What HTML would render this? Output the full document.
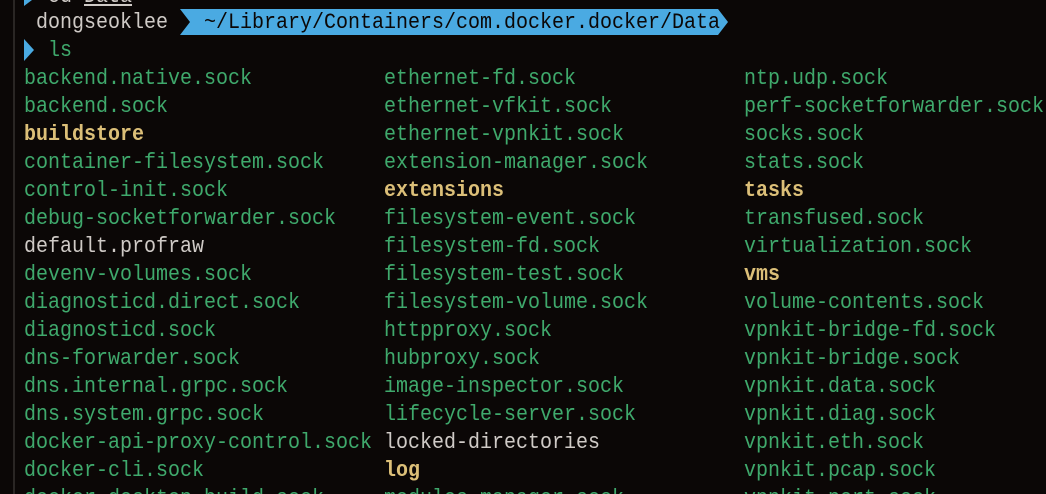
<!DOCTYPE html>
<html><head><meta charset="utf-8"><style>
html,body{margin:0;padding:0;background:#0b0706;width:1046px;height:494px;overflow:hidden;position:relative}
.l{position:absolute;font-family:"Liberation Mono",monospace;font-size:22px;line-height:28px;white-space:pre;color:#3fa96c;transform:scaleX(0.909);transform-origin:0 0}
.y{color:#dcbf78;font-weight:bold}
.w{color:#cfcac6}
.bar{position:absolute;left:13px;top:0;width:2px;height:494px;background:#2a2624}
</style></head><body>
<div class="bar"></div>
<div class="l w" style="left:24px;top:-17px">  cd <span style="text-decoration:underline">Data</span></div>
<svg style="position:absolute;left:0;top:0" width="1046" height="70">
<polygon points="24,-6 32,0 24,6" fill="#4aaae2"/>
<polygon points="180,9 718,9 728,22 718,35 180,35 190,22" fill="#4aaae2"/>
<polygon points="24,39 34,50 24,61" fill="#4aaae2"/>
</svg>
<div class="l w" style="left:36px;top:9px">dongseoklee</div>
<div class="l" style="left:204px;top:9px;color:#0b0706">~/Library/Containers/com.docker.docker/Data</div>
<div class="l" style="left:48px;top:37px">ls</div>
<div class="l" style="left:24px;top:65px">backend.native.sock
backend.sock
<span class="y">buildstore</span>
container-filesystem.sock
control-init.sock
debug-socketforwarder.sock
<span class="w">default.profraw</span>
devenv-volumes.sock
diagnosticd.direct.sock
diagnosticd.sock
dns-forwarder.sock
dns.internal.grpc.sock
dns.system.grpc.sock
docker-api-proxy-control.sock
docker-cli.sock
docker-desktop-build.sock</div>
<div class="l" style="left:384px;top:65px">ethernet-fd.sock
ethernet-vfkit.sock
ethernet-vpnkit.sock
extension-manager.sock
<span class="y">extensions</span>
filesystem-event.sock
filesystem-fd.sock
filesystem-test.sock
filesystem-volume.sock
httpproxy.sock
hubproxy.sock
image-inspector.sock
lifecycle-server.sock
<span class="w">locked-directories</span>
<span class="y">log</span>
modules-manager.sock</div>
<div class="l" style="left:744px;top:65px">ntp.udp.sock
perf-socketforwarder.sock
socks.sock
stats.sock
<span class="y">tasks</span>
transfused.sock
virtualization.sock
<span class="y">vms</span>
volume-contents.sock
vpnkit-bridge-fd.sock
vpnkit-bridge.sock
vpnkit.data.sock
vpnkit.diag.sock
vpnkit.eth.sock
vpnkit.pcap.sock
vpnkit.port.sock</div>
</body></html>
